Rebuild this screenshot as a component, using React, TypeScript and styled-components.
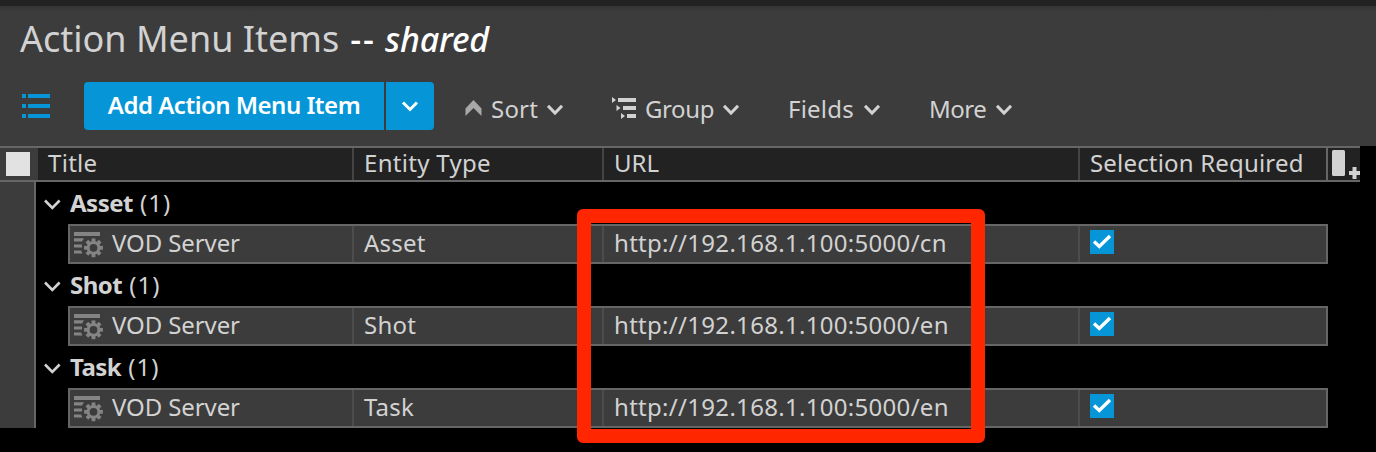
import React from "react";
import styled, { createGlobalStyle } from "styled-components";

const Global = createGlobalStyle`
  * { box-sizing: border-box; }
  body { margin: 0; background: #000; }
`;

const Page = styled.div`
  position: relative;
  width: 1376px;
  height: 452px;
  overflow: hidden;
  background: #000;
  color: #d2d2d2;
  font: 24px/32px "Noto Sans", sans-serif;
  white-space: nowrap;
`;

const Header = styled.header`
  height: 146px;
  background: linear-gradient(#343434, #3c3c3c 6px) #3c3c3c;
  border-top: 6px solid #222;
`;

const Heading = styled.h1`
  display: flex;
  margin: 0;
  height: 76px;
  padding: 8px 0 0 20px;
  font-size: 36px;
  line-height: 50px;
  font-weight: 400;
`;

const Scope = styled.span`
  display: flex;
  gap: 9px;
  margin-left: 11px;
  font-size: 34px;
  font-weight: 500;
  color: #fff;
`;

const Dashes = styled.span`
  letter-spacing: 2px;
`;

const ScopeName = styled.em`
  letter-spacing: -0.2px;
`;

const Toolbar = styled.div`
  display: flex;
  align-items: flex-start;
  height: 48px;
  padding-left: 22px;
`;

const ListIcon = styled.svg`
  margin: 12px 34px 0 0;
`;

const SplitButton = styled.div`
  display: flex;
  gap: 2px;
  margin-right: 31px;
`;

const ButtonPart = styled.button<{ $width: number; $side: "left" | "right" }>`
  display: flex;
  align-items: center;
  justify-content: center;
  width: ${(p) => p.$width}px;
  height: 48px;
  padding: 0;
  border: 0;
  border-radius: ${(p) => (p.$side === "left" ? "4px 0 0 4px" : "0 4px 4px 0")};
  background: #0696d7;
  color: #fff;
  font: 600 24px/46px "Noto Sans", sans-serif;
`;

const ButtonLabel = styled.span`
  padding-bottom: 2px;
  letter-spacing: -0.5px;
`;

const MenuButton = styled.div<{ $width: number; $gap: number }>`
  display: flex;
  align-items: flex-start;
  gap: ${(p) => p.$gap}px;
  width: ${(p) => p.$width}px;
  padding-top: 11px;
  svg { flex: none; }
`;

const Label = styled.span<{ $spacing?: number }>`
  letter-spacing: ${(p) => p.$spacing ?? 0}px;
`;

const Caret = styled.svg`
  margin-top: 11px;
`;

const columns = "316px 250px 476px 248px 32px";

const GridHead = styled.div`
  display: grid;
  grid-template-columns: 38px ${columns};
  width: 1360px;
  height: 36px;
  border: solid #666;
  border-width: 2px 0;
  background: #222;
`;

const SelectAll = styled.div`
  padding: 4px 6px;
  background: #3c3c3c;
  &::before {
    content: "";
    display: block;
    width: 24px;
    height: 24px;
    background: #e2e2e2;
  }
`;

const HeadCell = styled.div<{ $line?: string; $spacing?: number }>`
  padding-left: 10px;
  line-height: 30px;
  letter-spacing: ${(p) => p.$spacing ?? 0}px;
  border-right: 2px solid ${(p) => p.$line ?? "#444"};
`;

const Body = styled.div`
  display: flex;
  height: 246px;
`;

const Gutter = styled.div`
  width: 36px;
  border-right: 2px solid #666;
  background: #3c3c3c;
`;

const Groups = styled.div`
  width: 1292px;
`;

const GroupTitle = styled.div`
  display: flex;
  height: 42px;
  padding: 5px 0 0 8px;
  svg { margin: 12px 9px 0 0; }
`;

const GroupName = styled.b`
  margin-right: 7px;
  letter-spacing: -0.5px;
`;

const Count = styled.span`
  letter-spacing: 1px;
`;

const Row = styled.div`
  display: grid;
  grid-template-columns: 284px 250px 476px 246px;
  height: 40px;
  margin-left: 32px;
  border: 2px solid #666;
  background: #3c3c3c;
`;

const Cell = styled.div<{ $last?: boolean; $spacing?: number }>`
  display: flex;
  padding-left: 10px;
  line-height: 34px;
  letter-spacing: ${(p) => p.$spacing ?? 0}px;
  border-right: ${(p) => (p.$last ? "0" : "2px solid #4c4c4c")};
`;

const TitleCell = styled(Cell)`
  padding-left: 4px;
  svg { margin: 5px 8px 0 0; flex: none; }
`;

const Checkbox = styled.span`
  width: 24px;
  height: 24px;
  margin-top: 4px;
  background: #0696d7;
  svg { display: block; }
`;

const Highlight = styled.div`
  position: absolute;
  left: 577px;
  top: 209px;
  width: 408px;
  height: 234px;
  border: 14px solid #ff2600;
  border-radius: 6px;
`;

const Chevron = () => (
  <Caret width="16" height="12" viewBox="0 0 16 12" fill="none">
    <path d="M1 1.800 8 9 15 1.800" stroke="#d2d2d2" strokeWidth="3" />
  </Caret>
);

const gearTeeth = [0, 45, 90, 135, 180, 225, 270, 315];

const ItemIcon = () => (
  <svg width="30" height="30" viewBox="0 0 30 30">
    <g fill="#848484">
      <path d="M0 1h26v4H0zM0 7.300h10l-2 3.200H0zM0 13.400h8v3.200H0zM0 19.400h7l1.500 3.200H0z" />
      <g transform="translate(19.5 16.800)">
        {gearTeeth.map((angle) => (
          <rect key={angle} x="-1.900" y="-9.400" width="3.800" height="4.500" transform={`rotate(${angle})`} />
        ))}
      </g>
    </g>
    <circle cx="19.5" cy="16.800" r="5.400" fill="none" stroke="#848484" strokeWidth="3" />
  </svg>
);

const items = [
  { type: "Asset", url: "http://192.168.1.100:5000/cn" },
  { type: "Shot", url: "http://192.168.1.100:5000/en" },
  { type: "Task", url: "http://192.168.1.100:5000/en" },
];

export default function App() {
  return (
    <Page>
      <Global />
      <Header>
        <Heading>
          <span>Action Menu Items</span>
          <Scope><Dashes>--</Dashes><ScopeName>shared</ScopeName></Scope>
        </Heading>
        <Toolbar>
          <ListIcon width="28" height="24" viewBox="0 0 28 24" fill="#0696d7">
            <path d="M0 0h4v4H0zM6 0h22v4H6zM0 10h4v4H0zM6 10h22v4H6zM0 20h4v4H0zM6 20h22v4H6z" />
          </ListIcon>
          <SplitButton>
            <ButtonPart $width={300} $side="left"><ButtonLabel>Add Action Menu Item</ButtonLabel></ButtonPart>
            <ButtonPart $width={48} $side="right">
              <svg width="18" height="12" viewBox="0 0 18 12" fill="none">
                <path d="M2 2.500 9 9.500 16 2.500" stroke="#fff" strokeWidth="3" />
              </svg>
            </ButtonPart>
          </SplitButton>
          <MenuButton $width={147} $gap={9}>
            <svg width="17" height="32" viewBox="0 0 17 32">
              <path d="M.5 15.500 8.500 7l8 8.500v7.500l-8-8-8 8z" fill="#a8a8a8" />
            </svg>
            <Label $spacing={0.2}>Sort</Label>
            <Chevron />
          </MenuButton>
          <MenuButton $width={176} $gap={9}>
            <svg width="24" height="32" viewBox="0 0 24 32" fill="#d2d2d2">
              <path d="M0 4l4 3-4 3zM6 5h18v4H6zM4.500 12l4 3-4 3zM11 13h13v4H11zM9 20l4 3-4 3zM15 21h9v4h-9z" />
            </svg>
            <Label $spacing={-0.4}>Group</Label>
            <Chevron />
          </MenuButton>
          <MenuButton $width={141} $gap={10}><Label $spacing={0.2}>Fields</Label><Chevron /></MenuButton>
          <MenuButton $width={90} $gap={10}><Label $spacing={-0.5}>More</Label><Chevron /></MenuButton>
        </Toolbar>
      </Header>
      <GridHead>
        <SelectAll />
        <HeadCell $spacing={0.3}>Title</HeadCell>
        <HeadCell $spacing={0.3}>Entity Type</HeadCell>
        <HeadCell>URL</HeadCell>
        <HeadCell $line="#666" $spacing={0.18}>Selection Required</HeadCell>
        <svg width="32" height="32" viewBox="0 0 32 32" fill="#d2d2d2">
          <rect x="4" y="2" width="13" height="26" rx="1.500" />
          <path d="M24.500 19h4v4H32v4h-3.500v4h-4v-4H21v-4h3.500z" />
        </svg>
      </GridHead>
      <Body>
        <Gutter />
        <Groups>
          {items.map((item) => (
            <React.Fragment key={item.type}>
              <GroupTitle>
                <svg width="17" height="12" viewBox="0 0 17 12" fill="none">
                  <path d="M1 1.500 8.300 9 15.600 1.500" stroke="#d2d2d2" strokeWidth="2.600" />
                </svg>
                <GroupName>{item.type}</GroupName>
                <Count>(1)</Count>
              </GroupTitle>
              <Row>
                <TitleCell $spacing={-0.1}><ItemIcon />VOD Server</TitleCell>
                <Cell $spacing={0.2}>{item.type}</Cell>
                <Cell $spacing={0.3}>{item.url}</Cell>
                <Cell $last>
                  <Checkbox>
                    <svg width="24" height="24" viewBox="0 0 24 24" fill="none">
                      <path d="M4 11.500 9.300 16.500 20 6" stroke="#fff" strokeWidth="3.400" />
                    </svg>
                  </Checkbox>
                </Cell>
              </Row>
            </React.Fragment>
          ))}
        </Groups>
      </Body>
      <Highlight />
    </Page>
  );
}
